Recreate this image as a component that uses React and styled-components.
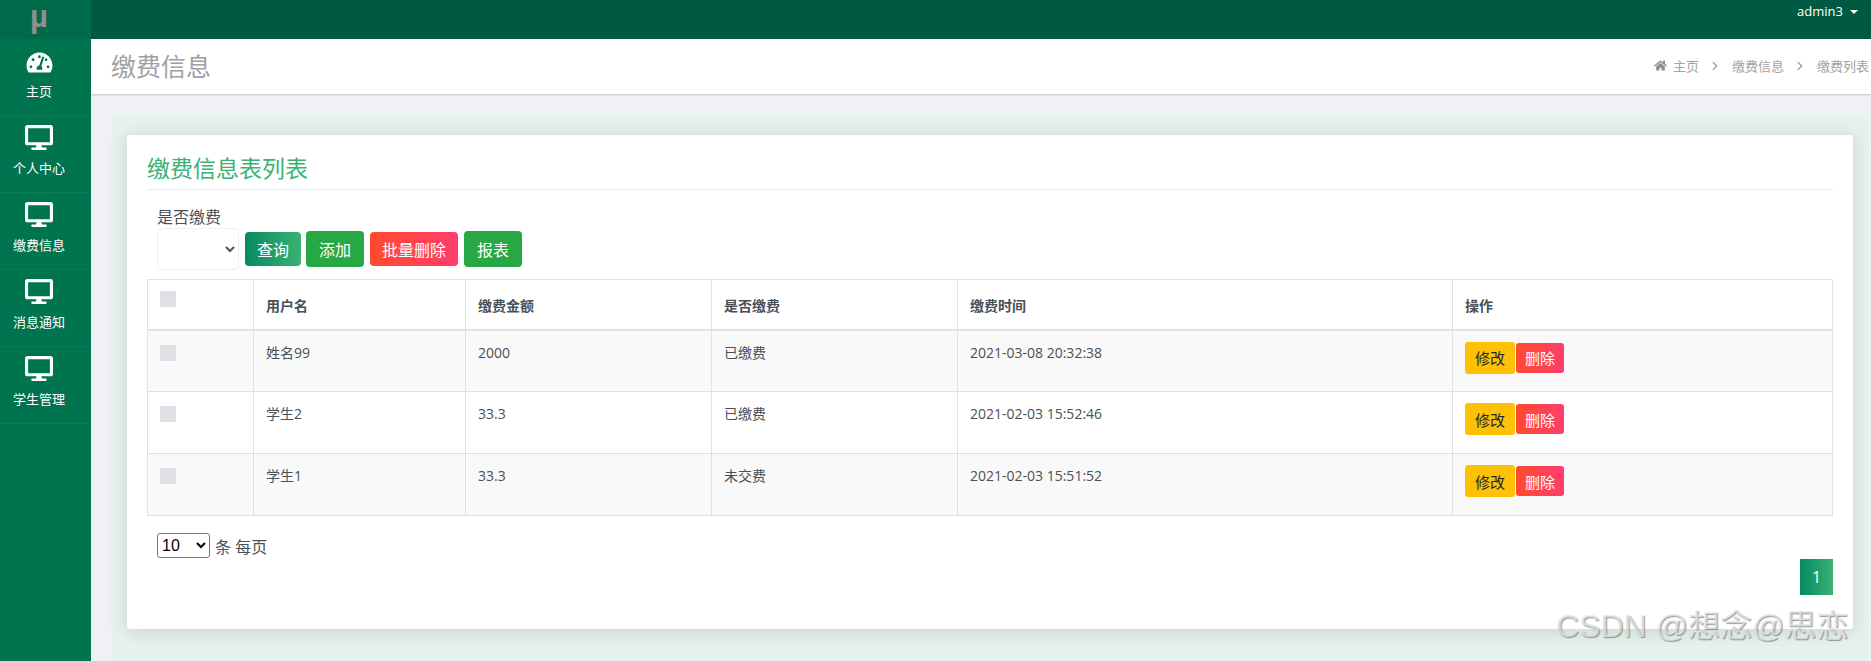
import React from 'react';
import styled, { createGlobalStyle } from 'styled-components';
import { FaDesktop, FaHome, FaTachometerAlt } from 'react-icons/fa';
import { FiChevronRight } from 'react-icons/fi';

const GlobalStyle = createGlobalStyle`
    html, body {
        margin: 0;
        padding: 0;
        height: 661px;
        overflow: hidden;
        background: #eff1f5;
        font-family: "Open Sans", "Noto Sans CJK SC", sans-serif;
    }
    * { box-sizing: border-box; }
`;

const Page = styled.div`
    display: flex;
    position: relative;
    width: 1871px;
    height: 661px;
    overflow: hidden;
`;

/* Sidebar */
const Sidebar = styled.aside`
    width: 91px;
    flex: none;
    background: #00734f;
`;

const Logo = styled.div`
    height: 39px;
    background: #006b4b;
    color: #8f8f8f;
    font: bold 31px/34px "Liberation Sans", sans-serif;
    text-align: center;
    padding-right: 13px;
`;

const NavItem = styled.div`
    height: 77px;
    display: flex;
    flex-direction: column;
    align-items: center;
    padding: ${p => (p.$gauge ? '12px' : '9px')} 13px 0 0;
    border-bottom: 1px solid #097b58;
    color: #fff;
    font-size: 13px;
    line-height: 18px;
    svg {
        display: block;
        width: ${p => (p.$gauge ? '27px' : '28px')};
        height: ${p => (p.$gauge ? '23px' : '25px')};
        margin-bottom: ${p => (p.$gauge ? '8px' : '9px')};
    }
`;

/* Main column */
const Main = styled.div`
    flex: 1;
    min-width: 0;
    display: flex;
    flex-direction: column;
`;

const TopBar = styled.div`
    height: 39px;
    flex: none;
    background: #005a41;
    color: #fff;
    font-size: 13px;
    line-height: 22px;
    display: flex;
    justify-content: flex-end;
    padding-right: 13px;
`;

const Caret = styled.span`
    width: 0;
    height: 0;
    margin: 10px 0 0 7px;
    border-left: 4px solid transparent;
    border-right: 4px solid transparent;
    border-top: 4px solid #fff;
`;

const PageHeader = styled.div`
    height: 55px;
    flex: none;
    background: #fff;
    box-shadow: 0 1px 2px rgba(60, 60, 90, 0.25);
    display: flex;
    align-items: center;
    justify-content: space-between;
    padding: 0 2px 0 20px;
    position: relative;
`;

const PageTitle = styled.h1`
    margin: -3px 0 0;
    font-size: 25px;
    font-weight: 400;
    color: #a0a0a5;
`;

const Crumbs = styled.div`
    display: flex;
    align-items: center;
    font-size: 13px;
    color: #a3a3a3;
    margin-top: -2px;
    svg { flex: none; }
`;

const CrumbHome = styled.span`
    display: flex;
    color: #8e8e8e;
    margin-right: 6px;
`;

const CrumbSep = styled.span`
    display: flex;
    color: #999;
    margin: 0 10px 0 9px;
`;

const Content = styled.div`
    flex: 1;
    padding: 20px 2px 0 20px;
`;

const Panel = styled.div`
    background: #e6f3ec;
    height: 100%;
    padding: 21px 16px 0 16px;
`;

const Card = styled.div`
    background: #fff;
    height: 494px;
    border-radius: 3px;
    padding: 0 20px;
    box-shadow: 0 2px 18px rgba(60, 70, 100, 0.2);
`;

const CardTitle = styled.h2`
    margin: 0;
    height: 55px;
    padding-top: 18px;
    font-size: 23px;
    line-height: 31px;
    font-weight: 400;
    color: #3bb273;
    border-bottom: 1px solid #e9ecef;
`;

const Filter = styled.div`
    padding: 17px 0 0 10px;
    height: 89px;
`;

const FilterLabel = styled.div`
    font-size: 16px;
    line-height: 21px;
    color: #495057;
`;

const FilterRow = styled.div`
    display: flex;
    align-items: center;
`;

const FilterSelect = styled.select`
    width: 82px;
    height: 42px;
    background: #fff;
    border: 1px solid #e6f3f1;
    border-radius: 4px;
    color: #495057;
    margin-right: 6px;
    outline: none;
`;

const ToolButton = styled.button`
    height: ${p => (p.$tall ? '36px' : '34px')};
    width: ${p => p.$w}px;
    margin-right: ${p => p.$gap}px;
    padding: 0;
    border: 0;
    border-radius: 4px;
    color: #fff;
    font-family: inherit;
    font-size: 16px;
    background: ${p => p.$bg};
`;

const green = 'linear-gradient(90deg, #058a60, #3bb273)';
const red = 'linear-gradient(90deg, #ff4a2e, #ff3d6e)';

const Table = styled.table`
    width: 1686px;
    table-layout: fixed;
    border-collapse: collapse;
    border: 1px solid #dee2e6;
    font-size: 14px;
    color: #495057;
`;

const Th = styled.th`
    height: 50px;
    padding: 12px;
    border: 1px solid #dee2e6;
    border-bottom-width: 2px;
    text-align: left;
    font-size: 14px;
    font-weight: 700;
    color: #495057;
    vertical-align: middle;
    padding-top: 13px;
`;

const Row = styled.tr`
    background: ${p => (p.$odd ? '#f9f9f9' : '#fff')};
`;

const Td = styled.td`
    height: 62px;
    padding: 12px;
    border: 1px solid #dee2e6;
    vertical-align: top;
    line-height: 20px;
`;

const Box = styled.span`
    display: block;
    width: 16px;
    height: 16px;
    background: #dee0e5;
    margin-top: ${p => (p.$head ? '-11px' : '2px')};
`;

const Actions = styled.div`
    display: flex;
    align-items: center;
    gap: 1px;
    margin-top: -1px;
`;

const SmallButton = styled.button`
    padding: 0;
    border: 0;
    border-radius: 3px;
    font-family: inherit;
    font-size: 15px;
    width: ${p => (p.$danger ? '48px' : '50px')};
    height: ${p => (p.$danger ? '30px' : '32px')};
    color: ${p => (p.$danger ? '#fff' : '#212529')};
    background: ${p => (p.$danger ? red : '#ffc107')};
`;

const PageSize = styled.div`
    display: flex;
    align-items: center;
    gap: 5px;
    padding: 17px 0 0 10px;
    font-size: 16px;
    color: #495057;
`;

const SizeSelect = styled.select`
    width: 53px;
    height: 25px;
    font-family: "Liberation Sans", sans-serif;
    font-size: 16px;
    color: #000;
    background: #fff;
    border: 1px solid #767676;
    border-radius: 3px;
`;

const Pager = styled.div`
    display: flex;
    justify-content: flex-end;
    padding-top: 1px;
`;

const PageNo = styled.span`
    width: 33px;
    height: 36px;
    display: flex;
    align-items: center;
    justify-content: center;
    color: #fff;
    font-size: 16px;
    background: ${green};
`;

const Watermark = styled.div`
    position: absolute;
    left: 1556px;
    top: 604px;
    font-family: "Liberation Sans", "Noto Sans CJK SC", sans-serif;
    font-size: 32px;
    line-height: 44px;
    white-space: nowrap;
    color: rgba(232, 232, 232, 0.75);
    text-shadow: 1px 1px 1px rgba(90, 90, 90, 0.6);
`;

const navItems = ['主页', '个人中心', '缴费信息', '消息通知', '学生管理'];

const columns = [
    { title: '', width: 106 },
    { title: '用户名', width: 212 },
    { title: '缴费金额', width: 246 },
    { title: '是否缴费', width: 246 },
    { title: '缴费时间', width: 495 },
    { title: '操作', width: 380 },
];

const rows = [
    { name: '姓名99', amount: '2000', paid: '已缴费', time: '2021-03-08 20:32:38' },
    { name: '学生2', amount: '33.3', paid: '已缴费', time: '2021-02-03 15:52:46' },
    { name: '学生1', amount: '33.3', paid: '未交费', time: '2021-02-03 15:51:52' },
];

export default function App() {
    return (
        <Page>
            <GlobalStyle />
            <Sidebar>
                <Logo>µ</Logo>
                {navItems.map((item, i) => (
                    <NavItem key={item} $gauge={i === 0}>
                        {i === 0 ? <FaTachometerAlt /> : <FaDesktop />}
                        {item}
                    </NavItem>
                ))}
            </Sidebar>
            <Main>
                <TopBar>
                    admin3
                    <Caret />
                </TopBar>
                <PageHeader>
                    <PageTitle>缴费信息</PageTitle>
                    <Crumbs>
                        <CrumbHome><FaHome size={13} /></CrumbHome>
                        主页
                        <CrumbSep><FiChevronRight size={14} /></CrumbSep>
                        缴费信息
                        <CrumbSep><FiChevronRight size={14} /></CrumbSep>
                        缴费列表
                    </Crumbs>
                </PageHeader>
                <Content>
                    <Panel>
                        <Card>
                            <CardTitle>缴费信息表列表</CardTitle>
                            <Filter>
                                <FilterLabel>是否缴费</FilterLabel>
                                <FilterRow>
                                    <FilterSelect />
                                    <ToolButton $w={56} $gap={5} $bg={green}>查询</ToolButton>
                                    <ToolButton $tall $w={58} $gap={6} $bg="#28a745">添加</ToolButton>
                                    <ToolButton $w={88} $gap={6} $bg={red}>批量删除</ToolButton>
                                    <ToolButton $tall $w={58} $gap={0} $bg="#28a745">报表</ToolButton>
                                </FilterRow>
                            </Filter>
                            <Table>
                                <colgroup>
                                    {columns.map(col => <col key={col.title} width={col.width} />)}
                                </colgroup>
                                <thead>
                                    <tr>
                                        {columns.map((col, i) => (
                                            <Th key={col.title}>{i === 0 ? <Box $head /> : col.title}</Th>
                                        ))}
                                    </tr>
                                </thead>
                                <tbody>
                                    {rows.map((row, i) => (
                                        <Row key={row.time} $odd={i % 2 === 0}>
                                            <Td><Box /></Td>
                                            <Td>{row.name}</Td>
                                            <Td>{row.amount}</Td>
                                            <Td>{row.paid}</Td>
                                            <Td>{row.time}</Td>
                                            <Td>
                                                <Actions>
                                                    <SmallButton>修改</SmallButton>
                                                    <SmallButton $danger>删除</SmallButton>
                                                </Actions>
                                            </Td>
                                        </Row>
                                    ))}
                                </tbody>
                            </Table>
                            <PageSize>
                                <SizeSelect defaultValue="10">
                                    <option value="10">10</option>
                                </SizeSelect>
                                条 每页
                            </PageSize>
                            <Pager>
                                <PageNo>1</PageNo>
                            </Pager>
                        </Card>
                    </Panel>
                </Content>
            </Main>
            <Watermark>CSDN @想念@思恋</Watermark>
        </Page>
    );
}
